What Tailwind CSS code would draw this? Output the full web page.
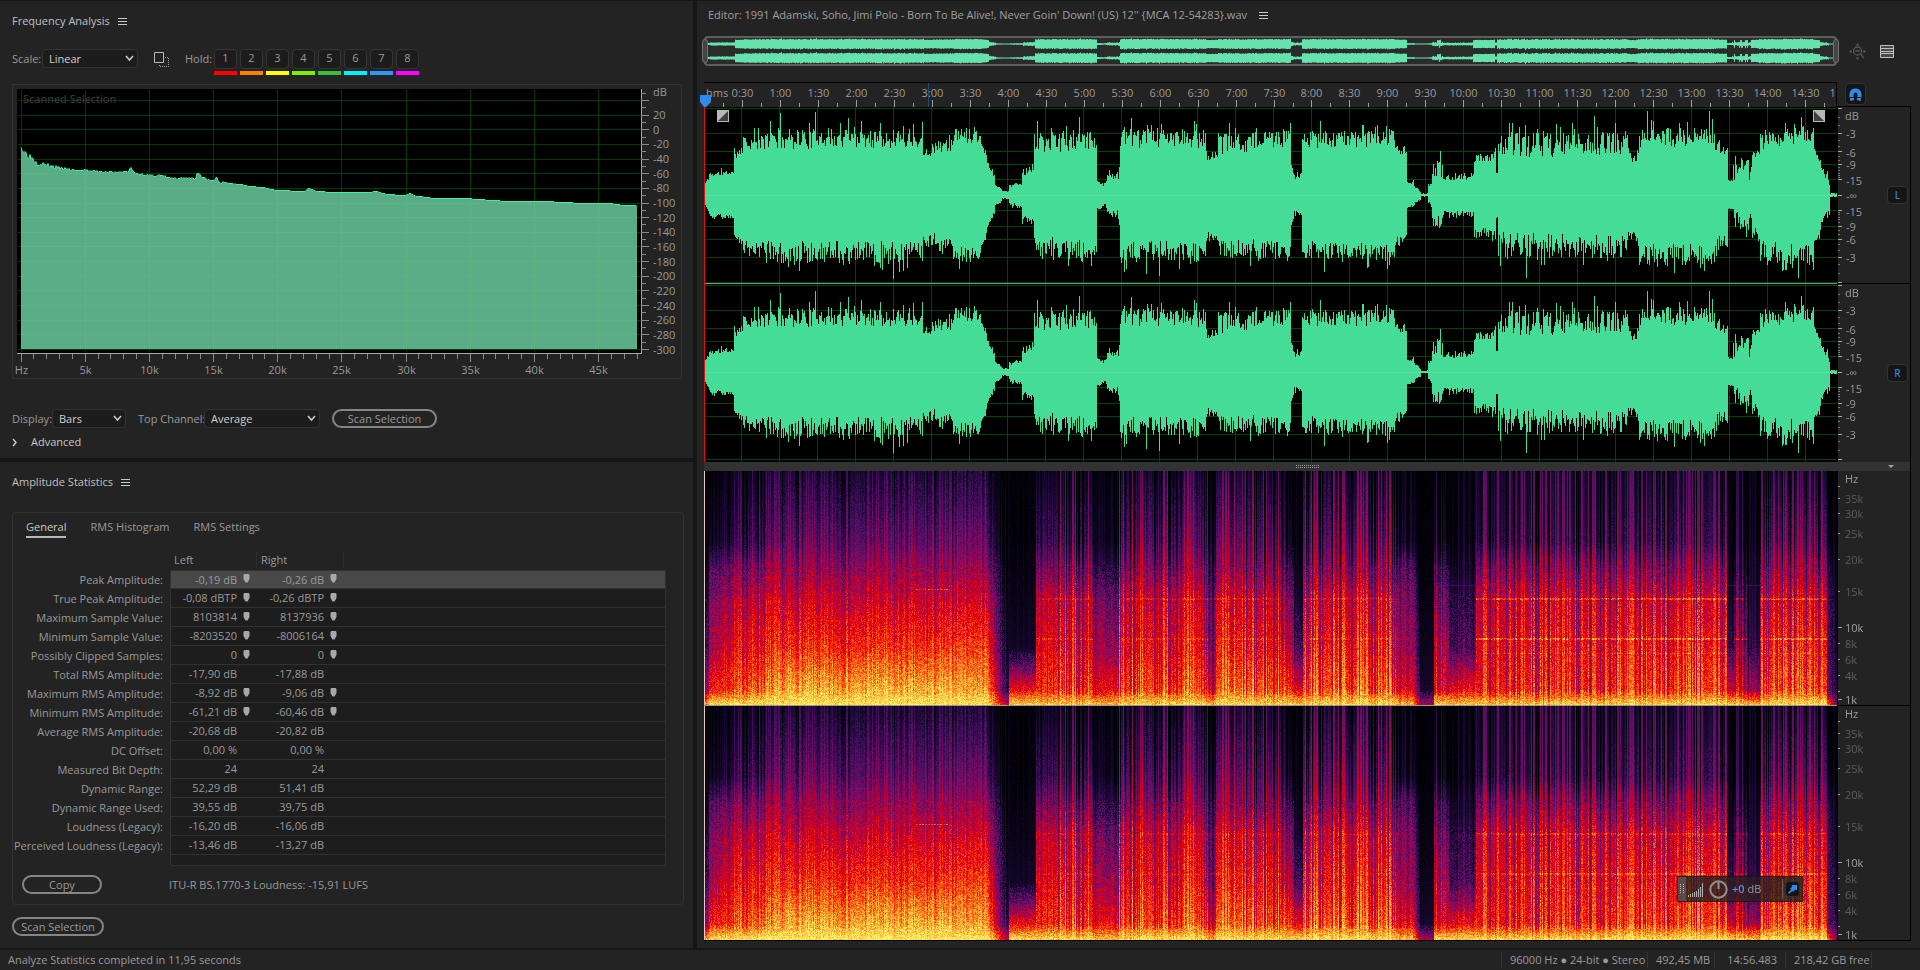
<!DOCTYPE html>
<html lang="en">
  <head>
    <meta charset="UTF-8" />
    <meta name="viewport" content="width=device-width, initial-scale=1.0" />
    <title>Audio Editor</title>

    <!-- Tailwind CSS -->
    <script src="https://cdn.jsdelivr.net/npm/@tailwindcss/browser@4"></script>
  </head>

  <body class="min-h-screen flex flex-col gap-0.5 pt-px bg-[#161616] font-['Open_Sans','Noto_Sans',sans-serif] text-[11px] leading-4 text-[#9a9a9a]">
    <main class="grow grid grid-cols-[693fr_1223fr] gap-1">
      <!-- Left column -->
      <div class="flex flex-col gap-1 min-w-0">
        <!-- Frequency Analysis -->
        <section class="bg-[#232323] pl-3 pr-[9px] pb-2">
          <header class="flex items-center gap-2 h-10">
            <h2 class="text-[#c0c0c0]">Frequency Analysis</h2>
            <button aria-label="Panel menu">
              <svg class="w-[9px] h-[9px]" viewBox="0 0 9 9" stroke="#c8c8c8"><path d="M0 1.5h9M0 4.5h9M0 7.5h9" /></svg>
            </button>
          </header>

          <div class="flex items-start mt-2">
            <label for="scale" class="w-[30px] leading-5">Scale:</label>
            <div class="relative w-24">
              <select id="scale" class="appearance-none block w-full h-[19px] pl-1.5 rounded-sm border border-[#333] bg-[#1c1c1c] text-[#d0d0d0]">
                <option>Linear</option>
                <option>Logarithmic</option>
              </select>
              <svg class="absolute right-1 top-1.5 w-[9px] h-[7px] pointer-events-none" viewBox="0 0 9 7" fill="none" stroke="#c8c8c8" stroke-width="1.6"><path d="M1 1l3.5 4L8 1" /></svg>
            </div>
            <button class="ml-4 mt-[3px]" aria-label="Copy graph">
              <svg class="w-[15px] h-[15px]" viewBox="0 0 15 15" fill="none"><path d="M.5.5h9v10h-9z" stroke="#b8b8b8" /><path d="M11 5.500h3.500v9h-9V12" stroke="#a0a0a0" stroke-dasharray="1 1" /></svg>
            </button>
            <span class="ml-4 w-[29px] leading-5">Hold:</span>
            <div class="flex gap-[3px]">
              <button class="w-[23px]"><span class="block h-5 rounded-sm border border-[#353535] bg-[#1c1c1c]">1</span><i class="block mt-0.5 h-1 bg-[#f00]"></i></button>
              <button class="w-[23px]"><span class="block h-5 rounded-sm border border-[#353535] bg-[#1c1c1c]">2</span><i class="block mt-0.5 h-1 bg-[#ff8000]"></i></button>
              <button class="w-[23px]"><span class="block h-5 rounded-sm border border-[#353535] bg-[#1c1c1c]">3</span><i class="block mt-0.5 h-1 bg-[#ff0]"></i></button>
              <button class="w-[23px]"><span class="block h-5 rounded-sm border border-[#353535] bg-[#1c1c1c]">4</span><i class="block mt-0.5 h-1 bg-[#78f000]"></i></button>
              <button class="w-[23px]"><span class="block h-5 rounded-sm border border-[#353535] bg-[#1c1c1c]">5</span><i class="block mt-0.5 h-1 bg-[#3cbe3c]"></i></button>
              <button class="w-[23px]"><span class="block h-5 rounded-sm border border-[#353535] bg-[#1c1c1c]">6</span><i class="block mt-0.5 h-1 bg-[#00f0ff]"></i></button>
              <button class="w-[23px]"><span class="block h-5 rounded-sm border border-[#353535] bg-[#1c1c1c]">7</span><i class="block mt-0.5 h-1 bg-[#2d96ff]"></i></button>
              <button class="w-[23px]"><span class="block h-5 rounded-sm border border-[#353535] bg-[#1c1c1c]">8</span><i class="block mt-0.5 h-1 bg-[#f0f]"></i></button>
            </div>
          </div>

          <div class="mt-[9px] mr-0.5 border border-[#313131]">
            <svg id="freq-chart" class="block w-full h-[293px]"></svg>
          </div>

          <div class="flex items-center mt-[30px]">
            <label for="display" class="w-10">Display:</label>
            <div class="relative w-[74px]">
              <select id="display" class="appearance-none block w-full h-[19px] pl-1.5 rounded-sm border border-[#333] bg-[#1c1c1c] text-[#d0d0d0]">
                <option>Bars</option>
                <option>Lines</option>
              </select>
              <svg class="absolute right-1 top-1.5 w-[9px] h-[7px] pointer-events-none" viewBox="0 0 9 7" fill="none" stroke="#c8c8c8" stroke-width="1.6"><path d="M1 1l3.5 4L8 1" /></svg>
            </div>
            <label for="channel" class="ml-3 w-[66px] whitespace-nowrap">Top Channel:</label>
            <div class="relative w-[116px]">
              <select id="channel" class="appearance-none block w-full h-[19px] pl-1.5 rounded-sm border border-[#333] bg-[#1c1c1c] text-[#d0d0d0]">
                <option>Average</option>
                <option>Left</option>
                <option>Right</option>
              </select>
              <svg class="absolute right-1 top-1.5 w-[9px] h-[7px] pointer-events-none" viewBox="0 0 9 7" fill="none" stroke="#c8c8c8" stroke-width="1.6"><path d="M1 1l3.5 4L8 1" /></svg>
            </div>
            <button class="ml-3 w-[105px] h-[19px] rounded-full border-2 border-[#858585] leading-[15px]">Scan Selection</button>
          </div>

          <button class="flex items-center gap-3 mt-1.5 text-[#c8c8c8]">
            <svg class="w-[7px] h-[9px]" viewBox="0 0 7 9" fill="none" stroke="currentColor" stroke-width="1.5"><path d="M1 1l3 3.500L1 8" /></svg>
            Advanced
          </button>
        </section>

        <!-- Amplitude Statistics -->
        <section class="grow bg-[#232323] pl-3 pr-[9px] pb-3">
          <header class="flex items-center gap-2 h-10">
            <h2 class="text-[#c0c0c0]">Amplitude Statistics</h2>
            <button aria-label="Panel menu">
              <svg class="w-[9px] h-[9px]" viewBox="0 0 9 9" stroke="#c8c8c8"><path d="M0 1.5h9M0 4.5h9M0 7.5h9" /></svg>
            </button>
          </header>

          <div class="mt-2.5 pb-2.5 border border-[#313131] rounded-sm">
            <nav class="flex gap-6 pl-[13px] pt-1.5">
              <button class="pb-px border-b-2 border-[#b8b8b8] text-[#c8c8c8]">General</button>
              <button class="pb-px border-b-2 border-transparent">RMS Histogram</button>
              <button class="pb-px border-b-2 border-transparent">RMS Settings</button>
            </nav>

            <div class="pr-[17px] mt-3">
              <table class="w-full table-fixed border-separate border-spacing-0">
                <thead>
                  <tr class="h-5 text-left">
                    <th class="w-[157px] p-0"></th>
                    <th class="w-[87px] p-0 pl-1 font-normal"><span class="block border-r border-[#2e2e2e]">Left</span></th>
                    <th class="w-[87px] p-0 pl-1 font-normal"><span class="block border-r border-[#2e2e2e]">Right</span></th>
                    <th class="p-0"></th>
                  </tr>
                </thead>
                <tbody id="stats"></tbody>
              </table>
            </div>

            <div class="flex items-center mt-[9px] pl-[9px]">
              <button class="w-20 h-[19px] rounded-full border-2 border-[#858585] leading-[15px]">Copy</button>
              <p class="ml-[67px]">ITU-R BS.1770-3 Loudness: -15,91 LUFS</p>
            </div>
          </div>

          <button class="block mt-3 w-[92px] h-[19px] rounded-full border-2 border-[#858585] leading-[15px] whitespace-nowrap">Scan Selection</button>
        </section>
      </div>

      <!-- Editor -->
      <section class="min-w-0 bg-[#232323] pl-[7px] pr-[9px] pb-[7px]">
        <header class="flex items-center gap-3 h-7 pl-1">
          <h1 class="text-[#a0a0a0]">Editor: 1991 Adamski, Soho, Jimi Polo - Born To Be Alive!, Never Goin' Down! (US) 12'' {MCA 12-54283}.wav</h1>
          <button aria-label="Panel menu">
            <svg class="w-[9px] h-[9px]" viewBox="0 0 9 9" stroke="#c8c8c8"><path d="M0 1.5h9M0 4.5h9M0 7.5h9" /></svg>
          </button>
        </header>

        <!-- Overview strip -->
        <div class="grid grid-cols-[1fr_74px] mt-[7px]">
          <div class="relative h-[30px] border-2 border-[#5e5e5e] rounded-sm bg-[#2b2b2b]">
            <canvas id="overview" class="block w-full h-[26px]"></canvas>
            <span class="absolute -left-1 top-px w-1.5 h-6 rounded-sm border border-[#707070] bg-[#454545]"></span>
            <span class="absolute -right-1 top-px w-1.5 h-6 rounded-sm border border-[#707070] bg-[#454545]"></span>
          </div>
          <div class="flex items-center gap-3.5 pl-3">
            <button aria-label="Zoom out full">
              <svg class="w-[17px] h-[17px]" viewBox="0 0 17 17" fill="none" stroke="#565656" stroke-width="1.3"><circle cx="8.5" cy="8" r="4" /><path d="M6.500 8h4M11.500 11l3.500 4" /><path d="M8.500 0l2 2.500h-4zM8.500 17l2-2.500h-4zM0 8.500l2.500-2v4zM17 8.500l-2.500-2v4z" fill="#565656" stroke="none" /></svg>
            </button>
            <button aria-label="View list">
              <svg class="w-3.5 h-[13px]" viewBox="0 0 14 13" stroke="#c0c0c0"><path d="M.5.5h13v12H.5z" fill="#4a4a4a" /><path d="M1 3.500h12M1 6.500h12M1 8.500h12" /></svg>
            </button>
          </div>
        </div>

        <!-- Time ruler -->
        <div class="grid grid-cols-[1fr_74px] mt-4">
          <div class="border-t border-r border-black">
            <svg id="ruler" class="block w-full h-6 overflow-visible [clip-path:inset(0_0_0_-6px)]"></svg>
          </div>
          <div class="pl-2 pt-px border-b border-black">
            <button class="grid place-items-center w-[21px] h-[22px] rounded-sm border border-[#333] bg-[#151515]" aria-label="Toggle snapping">
              <svg class="w-[13px] h-[13px]" viewBox="0 0 13 13" fill="none" stroke="#2d8ceb" stroke-width="4"><path d="M3.500 12.500C2 8 1.500 2.500 6.500 2.500S11 8 9.500 12.500" /><path d="M1 9.500h4M8 9.500h4" stroke="#151515" stroke-width="1" /></svg>
            </button>
          </div>
        </div>

        <!-- Waveforms -->
        <div class="grid grid-cols-[1fr_73px] border-r border-black">
          <canvas id="wave-l" class="block w-full h-[177px] bg-black"></canvas>
          <div class="flex items-center border-l border-b border-black">
            <svg class="db-axis grow h-[176px] w-[49px]"></svg>
            <button class="mr-0.5 w-[21px] h-[18px] rounded-sm border border-[#333] bg-[#151515] text-[10px] font-semibold text-[#2680d8]">L</button>
          </div>
          <canvas id="wave-r" class="block w-full h-[178px] bg-black"></canvas>
          <div class="flex items-center border-l border-black">
            <svg class="db-axis grow h-[178px] w-[49px]"></svg>
            <button class="mr-0.5 w-[21px] h-[18px] rounded-sm border border-[#333] bg-[#151515] text-[10px] font-semibold text-[#2680d8]">R</button>
          </div>
        </div>

        <!-- Splitter -->
        <div class="flex items-center h-[9px] pl-6 bg-[#323232] border-r border-black">
          <svg class="mx-auto w-6 h-[5px]" viewBox="0 0 24 5" stroke="#a0a0a0" stroke-dasharray="1 1"><path d="M0 1.500h24M0 3.500h24" /></svg>
          <svg class="mr-4 w-1.5 h-1" viewBox="0 0 6 4" fill="#a0a0a0"><path d="M0 0h6L3 3z" /></svg>
        </div>

        <!-- Spectrograms -->
        <div class="relative grid grid-cols-[1fr_73px] border-r border-b border-black">
          <canvas id="spec-l" class="block w-full h-[235px] bg-black"></canvas>
          <svg class="hz-axis block w-full h-[235px] border-l border-b border-black"></svg>
          <canvas id="spec-r" class="block w-full h-[234px] bg-black"></canvas>
          <svg class="hz-axis block w-full h-[234px] border-l border-black"></svg>

          <!-- Gain HUD -->
          <div class="absolute right-[107px] bottom-[38px] flex items-center w-[126px] h-[26px] bg-[#262020]/80 border border-black/30">
            <span class="grid place-items-center w-2 h-full bg-[#606060]/70">
              <svg class="w-1 h-2.5" viewBox="0 0 4 10" stroke="#c0c0c0" stroke-dasharray="1 1"><path d="M.5 0v10M3.500 0v10" /></svg>
            </span>
            <svg class="ml-0.5 w-[15px] h-[15px]" viewBox="0 0 15 15" stroke="#b0b0b0"><path d="M.5 15v-2M2.500 15v-3M4.500 15v-4M6.500 15v-5M8.500 15v-6M10.500 15v-8M12.500 15v-10M14.500 15V1" /></svg>
            <svg class="ml-1.5 w-[19px] h-[19px]" viewBox="0 0 19 19" fill="none" stroke="#909090" stroke-width="2"><circle cx="9.500" cy="9.500" r="8.200" /><path d="M9.500 2v7" /></svg>
            <button class="ml-1 text-[11px]"><b class="font-semibold text-[#3c96f5]">+0</b> dB</button>
            <span class="ml-auto w-px h-5 bg-[#606060]"></span>
            <button class="mx-0.5 grid place-items-center w-[15px] h-4 rounded-sm border border-[#303030] bg-[#141414]" aria-label="Pin HUD">
              <svg class="w-[9px] h-[9px]" viewBox="0 0 9 9" fill="#2d8ceb"><path d="M3.500 0H9v5.500L7.200 4.600 5.400 7 4.500 5.800 1.200 9 0 7.800l3.200-3.300L2 3.600l2.400-1.800z" /></svg>
            </button>
          </div>
        </div>
      </section>
    </main>

    <!-- Status bar -->
    <footer class="flex items-center h-5 pl-2 bg-[#232323]">
      <span>Analyze Statistics completed in 11,95 seconds</span>
      <div class="ml-auto mr-12 flex items-center h-4 whitespace-nowrap">
        <span class="w-[146px] pl-2 border-l border-[#333]">96000 Hz ● 24-bit ● Stereo</span>
        <span class="w-[67px] pl-2 border-l border-[#333]">492,45 MB</span>
        <span class="w-[71px] pr-2 text-right border-l border-[#333]">14:56.483</span>
        <span class="w-[87px] pl-2 border-x border-[#333]">218,42 GB free</span>
      </div>
    </footer>

    <!-- Statistics rows -->
    <script>
      // [label, left, right, has marker]
      const stats = [
        ["Peak Amplitude:", "-0,19 dB", "-0,26 dB", true],
        ["True Peak Amplitude:", "-0,08 dBTP", "-0,26 dBTP", true],
        ["Maximum Sample Value:", "8103814", "8137936", true],
        ["Minimum Sample Value:", "-8203520", "-8006164", true],
        ["Possibly Clipped Samples:", "0", "0", true],
        ["Total RMS Amplitude:", "-17,90 dB", "-17,88 dB", false],
        ["Maximum RMS Amplitude:", "-8,92 dB", "-9,06 dB", true],
        ["Minimum RMS Amplitude:", "-61,21 dB", "-60,46 dB", true],
        ["Average RMS Amplitude:", "-20,68 dB", "-20,82 dB", false],
        ["DC Offset:", "0,00 %", "0,00 %", false],
        ["Measured Bit Depth:", "24", "24", false],
        ["Dynamic Range:", "52,29 dB", "51,41 dB", false],
        ["Dynamic Range Used:", "39,55 dB", "39,75 dB", false],
        ["Loudness (Legacy):", "-16,20 dB", "-16,06 dB", false],
        ["Perceived Loudness (Legacy):", "-13,46 dB", "-13,27 dB", false],
      ];
      const pin = '<svg class="w-[7px] h-[9px] mr-[7px] mb-0.5" viewBox="0 0 7 9" fill="#a8a8a8"><path d="M.5 1l.8-1h4.400l.8 1v4L4.500 8.500h-2L.5 5z" /></svg>';
      const gap = '<span class="w-3.5"></span>';

      document.getElementById("stats").innerHTML = stats.map(([name, left, right, mark], i) => {
        const bg = i === 0 ? "bg-[#484848]" : "bg-[#1d1d1d]";
        const edge = i === 0 ? "border-t" : "";
        const cell = (v) => `<div class="flex items-center justify-end gap-1.5 whitespace-nowrap">${v}${mark ? pin : gap}</div>`;
        return `<tr class="h-[19px]">
          <th scope="row" class="p-0 pr-[7px] font-normal text-right whitespace-nowrap">${name}</th>
          <td class="p-0 ${bg} ${edge} border-l border-b border-[#313131]">${cell(left)}</td>
          <td class="p-0 ${bg} ${edge} border-b border-[#313131]">${cell(right)}</td>
          <td class="p-0 ${bg} ${edge} border-r border-b border-[#313131]"></td>
        </tr>`;
      }).join("") + `<tr class="h-[11px]">
          <td class="p-0"></td>
          <td colspan="3" class="p-0 bg-[#1d1d1d] border-x border-b border-[#313131] rounded-b-sm"></td>
        </tr>`;
    </script>

    <!-- Axes and frequency graph -->
    <script>
      const line = (x1, y1, x2, y2, c) => `<path d="M${x1} ${y1}L${x2} ${y2}" stroke="${c}" />`;
      const label = (x, y, s, c = "#9a9a9a", anchor = "start") =>
        `<text x="${x}" y="${y}" fill="${c}" text-anchor="${anchor}">${s}</text>`;
      const snap = (v) => Math.floor(v) + 0.5;

      // Average spectrum, one point per bend
      const points = [
        [0, 63], [1, 66], [3, 68], [6, 72], [12, 75], [16, 80], [24, 81], [31, 83], [46, 85], [65, 86], [79, 87], [94, 88],
        [107, 87], [109, 84], [111, 84], [113, 89], [129, 91], [139, 91], [147, 93], [157, 95], [161, 93], [174, 94], [176, 89],
        [178, 89], [181, 93], [192, 97], [195, 92], [197, 98], [209, 99], [219, 99], [226, 101], [244, 103], [253, 105], [269, 106],
        [284, 106], [287, 103], [294, 106], [304, 107], [329, 107], [349, 108], [353, 106], [364, 109], [384, 111], [388, 108],
        [394, 111], [409, 113], [437, 113], [464, 115], [479, 116], [514, 116], [552, 118], [584, 118], [599, 120], [615, 121],
      ];

      function drawChart() {
        const chart = document.getElementById("freq-chart");
        const plotR = chart.clientWidth - 40;
        const x0 = 8;
        const dataW = plotR - 4 - x0;
        const dbY = (db) => 264.5 - (db + 300) * 0.7325;
        let grid = "";
        for (let db = 40; db >= -300; db -= 20) grid += line(5, snap(dbY(db)), plotR, snap(dbY(db)), "#003c00");
        for (let k = 0; k < 48; k += 5) grid += line(snap(x0 + (k * dataW) / 48), 5, snap(x0 + (k * dataW) / 48), 267, "#003c00");

        let seed = 3;
        const rnd = () => ((seed = (seed * 16807) % 2147483647) / 2147483647);
        let curve = "";
        let p = 0;
        for (let i = 0; i <= dataW; i++) {
          const u = (i / dataW) * 615;
          while (p < points.length - 2 && points[p + 1][0] < u) p++;
          const [ax, ay] = points[p];
          const [bx, by] = points[p + 1];
          const jitter = u < 60 ? 6 * rnd() * (1 - u / 75) : u < 215 ? 2 * rnd() : 0.5;
          const y = Math.round(ay + ((by - ay) * (u - ax)) / (bx - ax) - (u > 3 ? jitter - 1 : 0));
          curve += `${i ? "L" : "M"}${x0 + i} ${y - 0.5}`;
        }
        const area = `${curve}V264H${x0}Z`;
        let out = `<rect x="4" y="4" width="${plotR - 4}" height="264" fill="#000" />${grid}`;
        out += `<path d="${area}" fill="#5aad86" /><path d="${curve}" fill="none" stroke="#3cf0a5" />`;
        out += `<clipPath id="under"><path d="${area}" /></clipPath>`;
        out += `<g opacity=".18" clip-path="url(#under)">${grid.replaceAll("#003c00", "#50e070")}</g>`;
        out += label(10, 18, "Scanned Selection", "#404040");
        out += line(4, 268.5, plotR + 1, 268.5, "#a8a8a8") + line(plotR + 0.5, 4, plotR + 0.5, 269, "#a8a8a8");
        for (let db = 50; db >= -300; db -= 10) {
          out += line(plotR, snap(dbY(db)), plotR + (db % 20 ? 5 : 8), snap(dbY(db)), "#8a8a8a");
          if (db <= 20 && db % 20 === 0) out += label(plotR + 12, Math.round(dbY(db)) + 4, db);
        }
        out += label(plotR + 12, 11, "dB");
        for (let k = 0; k <= 48; k++) {
          const x = snap(x0 + (k * dataW) / 48);
          out += line(x, 269, x, k % 5 ? 274 : 277, "#8a8a8a");
          if (k % 5 === 0) out += label(x, 289, k ? k + "k" : "Hz", "#9a9a9a", "middle");
        }
        chart.innerHTML = out;
      }

      // Time ruler, 14:56 long
      function drawRuler() {
        const ruler = document.getElementById("ruler");
        const w = ruler.clientWidth;
        const step = w / 29.84;
        let out = "";
        for (let i = 1; i < 61; i++) {
          const x = snap((i * step) / 2) + 1;
          out += line(x, i % 2 ? 20 : 17, x, 24, "#a0a0a0");
          if (i % 2 === 0) {
            const n = i / 2;
            out += label(x, 14, `${Math.floor(n / 2)}:${n % 2 ? "30" : "00"}`, "#9a9a9a", "middle");
          }
        }
        out += label(2, 14, "hms") + line(snap(w * 0.198), 0, snap(w * 0.198), 24, "#1f4a7a");
        out += '<path d="M-4 12h11v7l-5 5h-2l-4-5z" fill="#2d8ceb" />';
        ruler.innerHTML = out;
      }

      // Level axes
      document.querySelectorAll(".db-axis").forEach((el) => {
        let s = label(7, 13, "dB");
        for (const dir of [-1, 1]) {
          for (let db = 0; db >= -15; db--) {
            const y = 88.3 + dir * 87.3 * 10 ** (db / 20);
            const major = [0, -3, -6, -9, -15].includes(db);
            s += line(0, snap(y), major ? 4 : 2, snap(y), major ? "#a8a8a8" : "#787878");
            if (major && db) s += label(8, Math.round(y) + 5, db);
          }
        }
        el.innerHTML = s + line(0, 88.5, 4, 88.5, "#a8a8a8") + label(8, 93, "-∞");
      });

      // Frequency axes
      const hz = [[27, "35k"], [42, "30k"], [62, "25k"], [88, "20k"], [120, "15k"], [156, "10k"], [172, "8k"], [188, "6k"], [204, "4k"], [228, "1k"]];
      document.querySelectorAll(".hz-axis").forEach((el) => {
        let s = label(7, 12, "Hz") + line(0, 15.5, 2, 15.5, "#a0a0a0") + line(0, 220.5, 2, 220.5, "#a0a0a0");
        for (const [y, name] of hz) {
          const major = name === "10k" || name === "1k";
          s += line(0, y + 0.5, major ? 4 : 2, y + 0.5, "#a0a0a0") + label(7, y + 5, name, major ? "#a0a0a0" : "#5c5c5c");
        }
        el.innerHTML = s;
      });
    </script>

    <!-- Waveform and spectrogram -->
    <script>
      const LENGTH = 1132;
      const random = (s) => () => {
        s = (s + 0x6d2b79f5) | 0;
        let t = Math.imul(s ^ (s >>> 15), 1 | s);
        t = (t + Math.imul(t ^ (t >>> 7), 61 | t)) ^ t;
        return ((t ^ (t >>> 14)) >>> 0) / 4294967296;
      };

      // [start, end, body at start, body at end, highest peak]
      const wave = [
        [0, 4, 9, 17, 20], [4, 29, 17, 20, 29], [29, 38, 34, 42, 60], [38, 60, 44, 45, 72], [60, 218, 46, 46, 86],
        [218, 230, 38, 38, 62], [230, 248, 43, 43, 66], [248, 276, 51, 53, 82], [276, 282, 50, 34, 52], [282, 290, 32, 10, 33],
        [290, 297, 10, 4, 10], [297, 304, 3, 3, 5], [304, 317, 7, 10, 16], [317, 329, 18, 24, 34], [329, 392, 41, 44, 82],
        [392, 401, 12, 6, 18], [401, 412, 12, 18, 28], [412, 415, 8, 30, 40], [415, 501, 46, 46, 84], [501, 513, 34, 34, 54],
        [513, 586, 40, 48, 80], [586, 589, 30, 16, 30], [589, 597, 14, 18, 28], [597, 690, 45, 49, 80], [690, 702, 41, 38, 60],
        [702, 710, 10, 8, 16], [710, 716, 7, 2, 8], [716, 723, 1, 1, 2], [723, 727, 4, 12, 14], [727, 738, 16, 16, 52],
        [738, 769, 14, 15, 26], [769, 791, 31, 33, 54], [791, 793, 22, 22, 24], [793, 923, 37, 40, 86], [923, 934, 33, 33, 52],
        [934, 1010, 46, 50, 88], [1010, 1023, 40, 40, 66], [1023, 1028, 12, 12, 18], [1028, 1044, 13, 20, 50], [1044, 1047, 13, 28, 38],
        [1047, 1055, 32, 34, 54], [1055, 1109, 45, 50, 88], [1109, 1116, 44, 28, 50], [1116, 1125, 27, 3, 28], [1125, 1132, 1, 1, 3],
      ];

      const makeEnvelope = (seedValue) => {
        const r = random(seedValue);
        const env = new Float32Array(LENGTH);
        for (const [a, b, from, to, peak] of wave) {
          for (let x = a; x < b; x++) {
            const body = from + ((to - from) * (x - a)) / (b - a);
            const n = r();
            const m = r();
            env[x] = body + Math.max(0, peak - body) * (0.52 * n + 0.48 * m ** 8);
          }
        }
        return env;
      };
      const upper = makeEnvelope(11);
      const lower = makeEnvelope(29);

      const fit = (id) => {
        const c = document.getElementById(id);
        c.width = c.clientWidth;
        c.height = c.clientHeight;
        return [c, c.getContext("2d")];
      };

      const drawWave = (id, gain) => {
        const [c, g] = fit(id);
        const mid = 88;
        const gridLines = (color) => {
          g.fillStyle = color;
          for (const db of [0, -3, -6, -9, -15]) {
            const d = 87.3 * 10 ** (db / 20);
            g.fillRect(0, Math.floor(88.3 - d), c.width, 1);
            g.fillRect(0, Math.floor(88.3 + d), c.width, 1);
          }
          for (let i = 1; i < 30; i++) g.fillRect(Math.floor((i * c.width) / 29.84), 0, 1, c.height);
        };
        gridLines("#003600");
        g.fillStyle = "#45dc98";
        for (let x = 0; x < c.width; x++) {
          const i = Math.floor((x * LENGTH) / c.width);
          const u = Math.max(1, Math.round(upper[i] * gain));
          const d = Math.max(1, Math.round(lower[i] * gain));
          g.fillRect(x, mid - u, 1, u + d);
        }
        gridLines("rgba(120,240,130,.06)");
        g.fillStyle = "rgba(160,230,140,.3)";
        g.fillRect(0, mid, c.width, 1);
        g.fillStyle = "#e01010";
        g.fillRect(0, 0, 1, c.height);
        return [c, g];
      };

      // Fade handles in the top corners
      const drawFade = (g, x, flip) => {
        g.fillStyle = "#b8b8b8";
        g.fillRect(x, 3, 12, 12);
        g.fillStyle = "#404040";
        g.beginPath();
        if (flip) {
          g.moveTo(x + 1, 4);
          g.lineTo(x + 11, 14);
          g.lineTo(x + 1, 14);
        } else {
          g.moveTo(x + 11, 4);
          g.lineTo(x + 11, 14);
          g.lineTo(x + 1, 14);
        }
        g.fill();
      };

      // Overview, both channels stacked
      const drawOverview = () => {
        const [c, g] = fit("overview");
        g.fillStyle = "#66e3ac";
        for (let x = 0; x < c.width; x++) {
          const i = Math.floor((x * LENGTH) / c.width);
          const scale = (a) => Math.max(0.5, a > 32 ? 2.5 + a * 0.04 : a * 0.07);
          for (const mid of [6, 20]) g.fillRect(x, mid - scale(upper[i]), 1, scale(upper[i]) + scale(lower[i]));
        }
      };

      // Spectrogram levels at these heights, top to bottom
      const heights = [0, 0.3, 0.41, 0.55, 0.75, 0.93, 1];
      // [start, end, levels, column contrast, levels to fade to]
      const spec = [
        [0, 4, [0, 0.02, 0.08, 0.16, 0.25, 0.45, 0.9], 0.05],
        [4, 29, [0.03, 0.1, 0.29, 0.4, 0.48, 0.64, 1], 0.07, [0.06, 0.16, 0.33, 0.44, 0.55, 0.68, 1]],
        [29, 80, [0.07, 0.18, 0.34, 0.48, 0.58, 0.69, 1], 0.13, [0.12, 0.27, 0.4, 0.52, 0.64, 0.82, 1]],
        [80, 248, [0.13, 0.3, 0.4, 0.51, 0.65, 0.86, 1], 0.11],
        [248, 282, [0.17, 0.36, 0.44, 0.55, 0.7, 0.86, 1], 0.08],
        [282, 304, [0.1, 0.24, 0.38, 0.52, 0.66, 0.82, 1], 0.05, [0, 0, 0.01, 0.02, 0.04, 0.14, 0.5]],
        [304, 331, [0.01, 0.02, 0.04, 0.06, 0.1, 0.6, 0.98], 0.03],
        [331, 388, [0.08, 0.22, 0.35, 0.5, 0.57, 0.66, 0.96], 0.22],
        [388, 400, [0.02, 0.08, 0.18, 0.34, 0.42, 0.56, 0.92], 0.16],
        [400, 414, [0.01, 0.05, 0.16, 0.3, 0.4, 0.58, 0.92], 0.08],
        [414, 501, [0.12, 0.28, 0.38, 0.52, 0.59, 0.7, 0.98], 0.22],
        [501, 510, [0.03, 0.14, 0.24, 0.34, 0.4, 0.56, 0.92], 0.22],
        [510, 576, [0.1, 0.27, 0.35, 0.51, 0.59, 0.71, 0.98], 0.22],
        [576, 589, [0.04, 0.14, 0.26, 0.4, 0.52, 0.7, 0.98], 0.12],
        [589, 598, [0.01, 0.03, 0.06, 0.12, 0.24, 0.56, 0.96], 0.06],
        [598, 693, [0.12, 0.28, 0.37, 0.52, 0.6, 0.71, 0.98], 0.22],
        [693, 708, [0.02, 0.08, 0.28, 0.36, 0.42, 0.56, 0.92], 0.08],
        [708, 715, [0.03, 0.1, 0.26, 0.38, 0.44, 0.56, 0.88], 0.06, [0, 0, 0.02, 0.04, 0.1, 0.2, 0.5]],
        [715, 729, [0, 0.01, 0.02, 0.04, 0.07, 0.12, 0.5], 0.02],
        [729, 744, [0.05, 0.14, 0.28, 0.4, 0.52, 0.62, 0.98], 0.14],
        [744, 771, [0.01, 0.03, 0.09, 0.17, 0.24, 0.58, 0.96], 0.12],
        [771, 900, [0.1, 0.16, 0.34, 0.49, 0.55, 0.6, 0.96], 0.22],
        [900, 1022, [0.1, 0.19, 0.35, 0.5, 0.58, 0.65, 0.98], 0.21],
        [1022, 1029, [0, 0.02, 0.05, 0.1, 0.2, 0.5, 0.96], 0.06],
        [1029, 1043, [0.01, 0.06, 0.14, 0.26, 0.36, 0.52, 0.96], 0.2],
        [1043, 1055, [0, 0.02, 0.07, 0.1, 0.16, 0.4, 0.94], 0.1],
        [1055, 1122, [0.1, 0.25, 0.37, 0.51, 0.6, 0.68, 0.98], 0.2],
        [1122, 1132, [0.02, 0.1, 0.2, 0.28, 0.3, 0.36, 0.8], 0.04, [0, 0.01, 0.04, 0.06, 0.1, 0.14, 0.36]],
      ];
      const stops = [
        [0, 0, 0, 4], [0.13, 22, 8, 46], [0.27, 72, 14, 98], [0.4, 132, 10, 98], [0.5, 190, 0, 56], [0.58, 226, 0, 14],
        [0.68, 255, 48, 0], [0.78, 255, 122, 24], [0.88, 255, 180, 56], [1, 255, 240, 100],
      ];
      const palette = [];
      for (let i = 0; i < 256; i++) {
        const v = i / 255;
        let k = 0;
        while (k < stops.length - 2 && stops[k + 1][0] < v) k++;
        const t = (v - stops[k][0]) / (stops[k + 1][0] - stops[k][0]);
        palette.push([1, 2, 3].map((n) => stops[k][n] + (stops[k + 1][n] - stops[k][n]) * t));
      }

      const drawSpectrogram = (id, seedValue, tone) => {
        const [c, g] = fit(id);
        const img = g.createImageData(c.width, c.height);
        const columns = random(7);
        const noise = random(seedValue);
        const column = Array.from({ length: LENGTH }, (_, x) => {
          const beat = x > 770 && x % 12 < 2 ? 0.9 : -1;
          const n = columns();
          return Math.max(beat, n > 0.82 ? 0.5 + n / 2 : n < 0.25 ? -0.9 : n - 0.5);
        });
        for (let x = 0; x < c.width; x++) {
          const i = Math.floor((x * LENGTH) / c.width);
          const [a, b, from, contrast, to] = spec.find((s) => i < s[1]);
          const f = to ? (i - a) / (b - a) : 0;
          const levels = from.map((v, n) => (to ? v + (to[n] - v) * f : v));
          for (let y = 0; y < c.height; y++) {
            const h = y / c.height;
            let k = 0;
            while (k < 5 && heights[k + 1] < h) k++;
            let v = levels[k] + ((levels[k + 1] - levels[k]) * (h - heights[k])) / (heights[k + 1] - heights[k]);
            const grain = v < 0.15 ? 0.05 : h < 0.4 ? 0.12 : 0.22;
            v += column[i] * contrast * (h > 0.95 ? 0.3 : h < 0.4 ? 1 : 0.75) + (noise() - 0.5) * grain;
            // Steady tones
            const tonal = contrast > 0.16 && noise() > 0.2;
            const strong = i > 770 ? 0.2 : 0.09;
            if (tonal && (y === 127 || y === 128)) v += strong * tone;
            if (tonal && (y === 167 || y === 168)) v += strong * tone;
            if (tonal && i > 770 && y === 182) v += 0.1 * tone;
            if (y === 118 && i > 210 && i < 243 && i % 3) v += 0.24;
            if (y === 114 && ((i > 730 && i < 771) || (i > 1022 && i < 1055))) v = Math.max(v, 0.24 * tone);
            const rgb = palette[Math.max(0, Math.min(255, Math.round(v * 255)))];
            const o = (y * c.width + x) * 4;
            img.data[o] = rgb[0];
            img.data[o + 1] = rgb[1];
            img.data[o + 2] = rgb[2];
            img.data[o + 3] = 255;
          }
        }
        g.putImageData(img, 0, 0);
        g.fillStyle = "#e8c8c0";
        g.fillRect(0, 0, 1, c.height);
        return [c, g];
      };

      function drawAll() {
        drawChart();
        drawRuler();
        drawOverview();
        const [left, g] = drawWave("wave-l", 1);
        g.fillStyle = "#6f9a6f";
        g.fillRect(1, left.height - 1, left.width, 1);
        drawFade(g, 13, false);
        drawFade(g, left.width - 24, true);
        drawWave("wave-r", 0.97);
        const [specL, s] = drawSpectrogram("spec-l", 101, 1);
        s.fillStyle = "#9a9a8a";
        s.fillRect(0, specL.height - 1, specL.width, 1);
        drawSpectrogram("spec-r", 202, 0.6);
      }

      // Runs once at the start and again whenever the layout changes size
      new ResizeObserver(drawAll).observe(document.querySelector("main"));
      window.addEventListener("load", drawAll);
    </script>
  </body>
</html>
